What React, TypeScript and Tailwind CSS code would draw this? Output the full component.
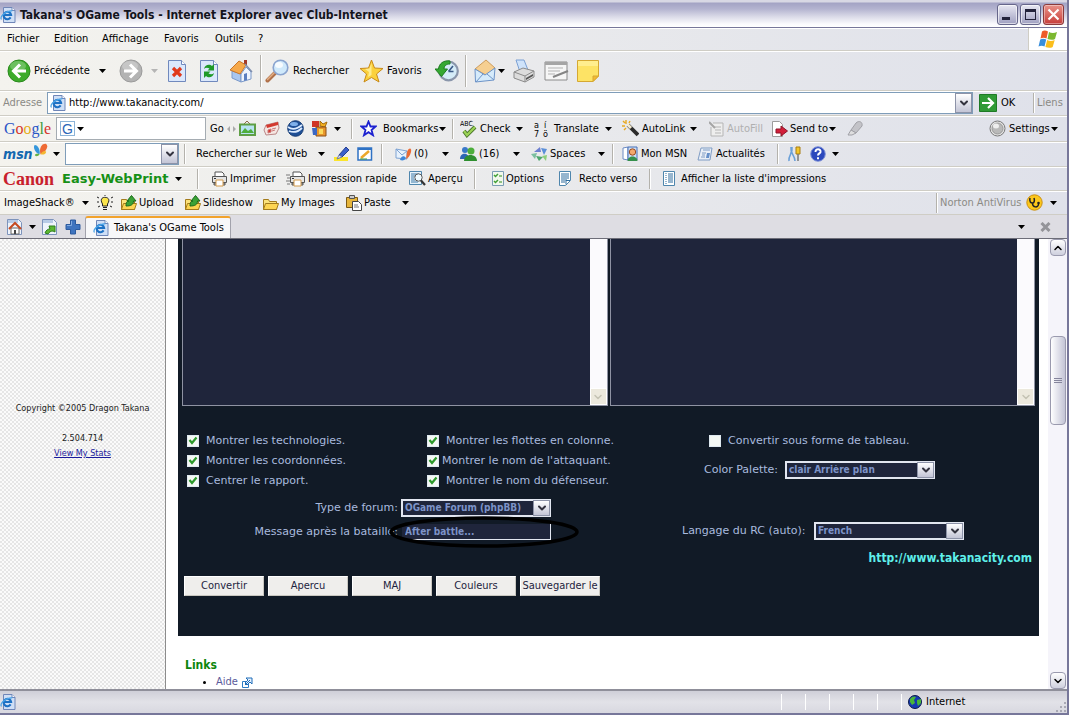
import type { ReactNode } from 'react'
import { ChevronDown, ChevronUp } from 'lucide-react'

const ui = "font-['DejaVu_Sans_Condensed','DejaVu_Sans',sans-serif]"
const page = "font-['DejaVu_Sans',sans-serif]"

const Caret = ({ className = 'text-black' }: { className?: string }) => (
  <svg width="7" height="4" viewBox="0 0 7 4" className={`shrink-0 ${className}`}>
    <path d="M0 0h7L3.5 4z" fill="currentColor" />
  </svg>
)

const Sep = ({ className = '' }: { className?: string }) => (
  <div className={`h-5 w-0.5 shrink-0 border-l border-[#b4b2ac] bg-white ${className}`} />
)

//toolbar button, the width covers the space up to the next one
const Tool = ({
  label,
  className,
  children,
}: {
  label: string
  className: string
  children?: ReactNode
}) => (
  <button
    type="button"
    aria-label={label}
    className={`flex h-full shrink-0 items-center whitespace-nowrap text-left ${className}`}
  >
    {children}
  </button>
)

const Bar = ({ className, children }: { className: string; children: ReactNode }) => (
  <div
    className={`flex shrink-0 items-center overflow-hidden border-b border-[#cfcdc5] bg-linear-to-r from-[#f4f3ee] to-[#dfe1ea] shadow-[inset_0_1px_0_#ffffff] ${className}`}
  >
    {children}
  </div>
)

const IEIcon = ({ size = 16 }: { size?: number }) => (
  <svg width={size} height={size} viewBox="0 0 16 16" className="shrink-0">
    <path d="M3.500.5h8.500l3 3v12h-11.500z" fill="#cfdff6" stroke="#6f86b8" />
    <path d="M12 .5v3h3" fill="#fff" stroke="#6f86b8" />
    <path
      d="M10.600 10.400A3.700 3.700 0 1 1 11.100 8H4"
      fill="none"
      stroke="#1d71c4"
      strokeWidth="2.100"
    />
    <path d="M1.500 12.500C-.5 10 4 4.500 12.300 3.600" fill="none" stroke="#4aa3e6" strokeWidth="1.200" />
  </svg>
)

const BackIcon = ({ forward = false }: { forward?: boolean }) => (
  <svg width="24" height="24" viewBox="0 0 24 24" className="shrink-0">
    <circle
      cx="12"
      cy="12"
      r="11"
      fill={forward ? '#b3b3b3' : '#3dab2b'}
      stroke={forward ? '#9b9b9b' : '#2a8a1c'}
    />
    <ellipse cx="11" cy="7" rx="8" ry="5" fill="#fff" opacity=".25" />
    <path
      d={forward ? 'M5 12h12M11 5.500l6.500 6.500-6.500 6.500' : 'M19 12H7M13 5.500L6.500 12l6.500 6.500'}
      fill="none"
      stroke="#fff"
      strokeWidth="3"
    />
  </svg>
)

const StopIcon = () => (
  <svg width="20" height="24" viewBox="0 0 20 24" className="shrink-0">
    <path d="M1.500 1.500h13l4 4v17h-17z" fill="#dbe8fc" stroke="#7089bd" />
    <path d="M14.500 1.500v4h4" fill="#fff" stroke="#7089bd" />
    <path d="M6 9l8 8M14 9l-8 8" stroke="#e0391c" strokeWidth="3.200" />
  </svg>
)

const RefreshIcon = () => (
  <svg width="20" height="24" viewBox="0 0 20 24" className="shrink-0">
    <path d="M1.500 1.500h13l4 4v17h-17z" fill="#dbe8fc" stroke="#7089bd" />
    <path d="M14.500 1.500v4h4" fill="#fff" stroke="#7089bd" />
    <path d="M5 10c1-5 6-5 8-3l2-2v6.500H8.500l2-2c-2-1-4-1-5.500.5z" fill="#1f9a2a" />
    <path d="M15 14c-1 5-6 5-8 3l-2 2v-6.500h6.500l-2 2c2 1 4 1 5.500-.5z" fill="#1f9a2a" />
  </svg>
)

const HomeIcon = () => (
  <svg width="24" height="24" viewBox="0 0 24 24" className="shrink-0">
    <path d="M15 1h3v5h-3z" fill="#a33a26" />
    <path d="M3 12l9 3v8l-9-4z" fill="#a9c6ee" stroke="#7b99c9" />
    <path d="M12 15l5-7 5 5v7l-10 3z" fill="#eef4fd" stroke="#7b99c9" />
    <path d="M1 11L10 2l7 4-6 9z" fill="#f6a94a" stroke="#c9762b" />
    <path d="M16 5l7 8" stroke="#7f8fae" strokeWidth="1.500" />
    <path d="M15 15l3-1v7l-3 1z" fill="#5b7fc0" />
  </svg>
)

const SearchIcon = () => (
  <svg width="25" height="24" viewBox="0 0 25 24" className="shrink-0">
    <path d="M10 14L2.500 21.500" stroke="#b0714a" strokeWidth="4" strokeLinecap="round" />
    <path d="M9.500 13.500L2.500 20.500" stroke="#e2ae85" strokeWidth="1.500" strokeLinecap="round" />
    <circle cx="15.500" cy="8.500" r="7.300" fill="#cfe9fb" stroke="#8aa4cf" strokeWidth="1.600" />
    <ellipse cx="14" cy="6" rx="4" ry="3" fill="#fff" opacity=".8" />
  </svg>
)

const StarIcon = () => (
  <svg width="25" height="24" viewBox="0 0 25 24" className="shrink-0">
    <path
      d="M12.500 1l3 8 8.500.5-6.500 5.500 2.500 8-7.500-4.500L5 23l2.500-8L1 9.500 9.500 9z"
      fill="#fbd13c"
      stroke="#c98a18"
      strokeLinejoin="round"
    />
    <path d="M12.500 4v12L9 18l1-5-4-3 4.500-.5z" fill="#fff2a4" opacity=".8" />
  </svg>
)

const HistoryIcon = () => (
  <svg width="24" height="24" viewBox="0 0 24 24" className="shrink-0">
    <circle cx="13.500" cy="12" r="9.300" fill="#d5ecf8" stroke="#8a96ab" strokeWidth="2.200" />
    <path d="M13.500 12.500L18 7M13.500 12.500h5" stroke="#3b5a86" strokeWidth="1.600" />
    <path
      d="M15 2C8 1 4 5 3.500 10H0l6.500 7.500L12.500 10H9c0-3 2-5 6-5z"
      fill="#35a832"
      stroke="#1e7d20"
    />
  </svg>
)

const MailIcon = () => (
  <svg width="22" height="24" viewBox="0 0 22 24" className="shrink-0">
    <path d="M1 10L12 1l9 8-9 7z" fill="#f6cf91" stroke="#cd9c5c" />
    <path d="M1 10l10 6 10-7-1 12L1.500 23z" fill="#d6ebfb" stroke="#6d94c8" />
    <path d="M2 23l7-8M20 21l-7-6" stroke="#6d94c8" />
  </svg>
)

const PrintIcon = () => (
  <svg width="24" height="24" viewBox="0 0 24 24" className="shrink-0">
    <path d="M4 1h8l4 10-8 2z" fill="#cfe3fa" stroke="#7ba0d4" />
    <path d="M2 13l9-4 11 3v6l-9 5-11-4z" fill="#dcdcdc" stroke="#8b8b8b" />
    <path d="M2 13l11 4 9-5M13 17v6" fill="none" stroke="#8b8b8b" />
    <path d="M14 19l7-4v2l-7 4z" fill="#555" />
  </svg>
)

const EditIcon = () => (
  <svg width="25" height="20" viewBox="0 0 25 20" className="shrink-0">
    <path d="M1 1h22v18H1z" fill="#f6f6f6" stroke="#8c8c8c" />
    <path d="M1 1h22v3H1z" fill="#a5a5a5" />
    <path d="M4 7h15M4 10h12M4 13h7" stroke="#b3b3b3" />
    <path d="M24 10L9 16" stroke="#858585" strokeWidth="2" />
  </svg>
)

const NoteIcon = () => (
  <svg width="24" height="24" viewBox="0 0 24 24" className="shrink-0">
    <path d="M1.500 1.500h21V17L17 22.500H1.500z" fill="#fde365" stroke="#d5a832" />
    <path d="M2 2h20v5H2z" fill="#fff2a0" opacity=".7" />
    <path d="M22.500 17H17v5.500z" fill="#f4b932" stroke="#d5a832" />
  </svg>
)

const WindowsFlag = () => (
  <svg width="20" height="19" viewBox="0 0 20 19">
    <path d="M4 1.500c2-1.500 4-1 6 0L8.500 8.500c-2-1-4-1-6 0z" fill="#ee5a29" />
    <path d="M11 2c2 1.200 5 1.500 8 0l-2 7c-2 1.200-5 1-7.500 0z" fill="#7cb82f" />
    <path d="M2.200 9.500c2-1 4-1 6 0L6.500 16.500c-2-1-4-1-6 0z" fill="#3a8fdc" />
    <path d="M9.200 10c2 1.200 5 1.200 7.500 0l-2 7c-2 1.200-5 1-7.300 0z" fill="#fbbe1c" />
  </svg>
)

const PictureIcon = () => (
  <svg width="17" height="15" viewBox="0 0 17 15" className="shrink-0">
    <path d="M5 3l3-3 3 3" fill="none" stroke="#8a6a4a" />
    <path d="M1 3.500h15v10.500H1z" fill="#b8e3f3" stroke="#5f9f45" strokeWidth="2" />
    <path d="M2 12l4-5 3 3 3-2 3 4z" fill="#4fae3d" />
  </svg>
)

const NewsIcon = () => (
  <svg width="17" height="15" viewBox="0 0 17 15" className="shrink-0">
    <path d="M3 4l12-3 1 6-3 6-10 1-2-5z" fill="#f5e6e2" stroke="#b88" />
    <path d="M3 4l12-3v3L4 7z" fill="#d3392f" />
    <path d="M5 9l3-1v3l-3 1zM9 8l4-1M9 10l3-1" fill="#d3392f" stroke="#c77" />
  </svg>
)

const GlobeIcon = () => (
  <svg width="17" height="17" viewBox="0 0 17 17" className="shrink-0">
    <circle cx="8.500" cy="8.500" r="7.800" fill="#1e4f96" stroke="#153a73" />
    <path d="M1 7c4 3 9 2 14-2M2 11c5 2 9 1 13-3" fill="none" stroke="#dcebff" strokeWidth="1.800" />
    <ellipse cx="7" cy="4" rx="4" ry="2" fill="#7fb0ea" />
  </svg>
)

const PuzzleIcon = () => (
  <svg width="17" height="17" viewBox="0 0 17 17" className="shrink-0">
    <path d="M1 1h7v6H1z" fill="#cf3526" />
    <path d="M9 1l3 3 4-2-2 5-5-1z" fill="#f3b11f" stroke="#a36a11" />
    <path d="M5 7h10v9H5z" fill="#e9962c" stroke="#8a4e18" />
    <path d="M1 8h5v7H2z" fill="#3c68c4" />
    <path d="M8 9h4v5H8z" fill="#fbdb5c" />
  </svg>
)

const BlueStar = () => (
  <svg width="17" height="17" viewBox="0 0 17 17" className="shrink-0">
    <path
      d="M8.500 1.500l2 5h5l-4 3.500 1.500 5.200-4.500-3-4.500 3L5.500 10l-4-3.500h5z"
      fill="#fff"
      stroke="#1d22d0"
      strokeWidth="1.800"
    />
  </svg>
)

const CheckIcon = () => (
  <svg width="18" height="18" viewBox="0 0 18 18" className="shrink-0">
    <text x="0" y="6" fontSize="7" fontFamily="DejaVu Sans Condensed">
      ABC
    </text>
    <path d="M4 11l3 4 8-8" fill="none" stroke="#49752b" strokeWidth="4" />
    <path d="M4 11l3 4 8-8" fill="none" stroke="#9bd256" strokeWidth="2.200" />
  </svg>
)

const TranslateIcon = () => (
  <svg
    width="17"
    height="18"
    viewBox="0 0 17 18"
    className="shrink-0"
    fontSize="9"
    fontFamily="DejaVu Sans Condensed"
  >
    <text x="0" y="8">a</text>
    <text x="10" y="8">í</text>
    <text x="0" y="17">7</text>
    <text x="9" y="17">ö</text>
  </svg>
)

const WandIcon = () => (
  <svg width="17" height="17" viewBox="0 0 17 17" className="shrink-0">
    <path d="M6 5l10 10" stroke="#2b2b2b" strokeWidth="3.800" />
    <path d="M5 4l4 4" stroke="#f4ead0" strokeWidth="3" />
    <path d="M4 0v4M0 6h3M1 1l2 2M8 1L7 3M2 10l2-2" stroke="#e8a91f" strokeWidth="1.400" />
  </svg>
)

const AutoFillIcon = () => (
  <svg width="15" height="16" viewBox="0 0 15 16" className="shrink-0">
    <path d="M4 2h10v13H2V6" fill="#eee" stroke="#b5b5b5" />
    <path d="M6 6h6M6 9h6M6 12h6" stroke="#b5b5b5" />
    <path d="M0 1l6 6" stroke="#a5a5a5" strokeWidth="2" />
  </svg>
)

const SendIcon = () => (
  <svg width="17" height="16" viewBox="0 0 17 16" className="shrink-0">
    <path d="M1.500.5h7l3 3v12h-10z" fill="#fff" stroke="#9c9c9c" />
    <path d="M5 8h5V5l6.500 5-6.500 5v-3H5z" fill="#d21f3a" stroke="#8f1428" />
  </svg>
)

const MarkerIcon = () => (
  <svg width="16" height="16" viewBox="0 0 16 16" className="shrink-0">
    <path d="M9 2c3-3 7-1 6 3l-6 7-5-3z" fill="#c3c3c8" stroke="#a0a0a6" />
    <path d="M4 9l5 3-4 2H1z" fill="#dededf" stroke="#a0a0a6" />
  </svg>
)

const OrbIcon = () => (
  <svg width="17" height="17" viewBox="0 0 17 17" className="shrink-0">
    <circle cx="8.500" cy="8.500" r="7.500" fill="#e6e6e6" stroke="#777" />
    <circle cx="8.500" cy="8.500" r="5.500" fill="#b9b9b9" stroke="#999" />
    <ellipse cx="7" cy="6" rx="3" ry="2.500" fill="#eee" />
  </svg>
)

const Butterfly = () => (
  <svg width="15" height="15" viewBox="0 0 16 16" className="mb-2 shrink-0">
    <path d="M7 12C1 10 0 3 2 2c3 0 6 5 5 10z" fill="#3597dc" />
    <path d="M8 12C6 5 10 0 14 1c3 2 0 9-6 11z" fill="#ee6b35" />
    <path d="M8 12c2-4 5-4 6-3 0 3-3 4-6 3z" fill="#f4b731" />
    <path d="M7 12c-3-1-5 0-5 1 1 2 4 1 5-1z" fill="#67b346" />
  </svg>
)

const PencilIcon = () => (
  <svg width="17" height="16" viewBox="0 0 17 16" className="shrink-0">
    <path d="M1 11h14v4H1z" fill="#fbe52c" />
    <path d="M6 9l7-8 3 3-7 7z" fill="#3b60cb" stroke="#25408f" />
    <path d="M6 9l3 2-5 2z" fill="#dfe5f5" stroke="#6c7aa8" />
  </svg>
)

const FormEditIcon = () => (
  <svg width="16" height="14" viewBox="0 0 16 14" className="shrink-0">
    <path d="M1 1h13.500v12H1z" fill="#fff" stroke="#2f72c4" strokeWidth="1.500" />
    <path d="M1 1h13.500v2H1z" fill="#2f72c4" />
    <path d="M4 11l8-7" stroke="#eca72a" strokeWidth="2.500" />
    <path d="M3 12h7" stroke="#3a9c44" />
  </svg>
)

const HotmailIcon = () => (
  <svg width="17" height="16" viewBox="0 0 17 16" className="shrink-0">
    <path d="M1 3l11 2v8L1 12z" fill="#e8f2fd" stroke="#7ea3d3" />
    <path d="M1 3l6 6 5-4" fill="none" stroke="#7ea3d3" />
    <path d="M12 6c2-5 5-4 4 0s-3 6-5 7z" fill="#e96b36" />
    <path d="M11 12c-2-3-5-2-6 2 3 1 5 0 6-2z" fill="#3d86da" />
  </svg>
)

const PeopleIcon = () => (
  <svg width="17" height="16" viewBox="0 0 17 16" className="shrink-0">
    <circle cx="5" cy="4" r="3" fill="#3a79c9" />
    <path d="M0 13c0-7 9-7 9 0z" fill="#2f67b5" />
    <circle cx="11" cy="5" r="3.500" fill="#4cae3b" />
    <path d="M4 15c0-8 13-8 13 0z" fill="#2e8f2f" />
  </svg>
)

const SpacesIcon = () => (
  <svg width="17" height="16" viewBox="0 0 17 16" className="shrink-0">
    <path d="M3 6l6-5 1 5z" fill="#6d7fd0" />
    <path d="M10 2l6 1-3 6z" fill="#5b8fd8" />
    <path d="M0 8l6-1-2 6z" fill="#7cbf9f" />
    <path d="M5 10l7 1-4 4z" fill="#4ea66d" />
    <path d="M11 10l5-1-1 6z" fill="#8ecf7c" />
  </svg>
)

const MonMsnIcon = () => (
  <svg width="17" height="16" viewBox="0 0 17 16" className="shrink-0">
    <path d="M1 2l5-1v13l-5-1z" fill="#fff" stroke="#6d8cc4" />
    <path d="M6 1h9v13H6z" fill="#cfe0f6" stroke="#446eb6" />
    <circle cx="10.500" cy="6" r="3.200" fill="#f3a96c" stroke="#9a4c22" />
    <path d="M5.500 15c0-6 10-6 10 0z" fill="#35904c" />
  </svg>
)

const ActuIcon = () => (
  <svg width="17" height="14" viewBox="0 0 17 14" className="shrink-0">
    <path d="M4 1h11l-2 12H1l2-8z" fill="#e9eff7" stroke="#7f9cc4" />
    <path d="M6 3h7M5 6h4M5 8h3M4 10h4" stroke="#7f9cc4" />
    <path d="M10 6h3l-1 5H9z" fill="#6690c9" />
  </svg>
)

const ToolsIcon = () => (
  <svg width="14" height="16" viewBox="0 0 14 16" className="shrink-0">
    <path d="M2 15C1 9 6 8 5 1M8 15C8 9 3 8 4 1" fill="none" stroke="#6ba0d8" strokeWidth="1.600" />
    <path d="M9 1h4v7H9z" fill="#f3c62a" stroke="#a77d12" />
    <path d="M11 8v7" stroke="#777" strokeWidth="1.500" />
  </svg>
)

const HelpIcon = () => (
  <svg width="16" height="16" viewBox="0 0 16 16" className="shrink-0">
    <circle cx="8" cy="8" r="7.300" fill="#2b48bd" stroke="#7f92d8" />
    <path d="M5.500 6c0-4 5.500-3.500 5 0-.3 1.500-2.500 1.500-2.500 3.500M8 11.200v2" fill="none" stroke="#fff" strokeWidth="2" />
  </svg>
)

const CanonPrinter = ({ fast = false }: { fast?: boolean }) => (
  <svg width={fast ? 20 : 17} height="16" viewBox={fast ? '-3 0 20 16' : '0 0 17 16'} className="shrink-0">
    <path d="M4 5V1h7l2 2v2" fill="#fff" stroke="#555" />
    <path d="M1.500 5.500h14v6h-14z" fill="#e4e4e4" stroke="#555" />
    <path d="M3 12h11v2H3z" fill="#bbb" stroke="#555" />
    <path d="M5 9h7v6H5z" fill="#fff" stroke="#d39b4c" />
    <path d="M3 7.500h2" stroke="#333" />
    {fast && <path d="M-3 4h4M-2 7h3M-3 10h4M-2 13h3" stroke="#777" />}
  </svg>
)

const PreviewIcon = () => (
  <svg width="17" height="15" viewBox="0 0 17 15" className="shrink-0">
    <path d="M.5.5h12v13H.5z" fill="#e7f3fb" stroke="#4f86ad" />
    <path d="M2 3h8M2 5h4M2 7h3M2 9h4M2 11h7" stroke="#3f7ba8" />
    <circle cx="9.500" cy="6.500" r="3.700" fill="#eefaff" stroke="#555" />
    <path d="M12 9.500l4 4.500" stroke="#333" strokeWidth="2.200" />
  </svg>
)

const OptionsIcon = () => (
  <svg width="12" height="15" viewBox="0 0 12 15" className="shrink-0">
    <path d="M.5.5h11v14H.5z" fill="#f1f8ec" stroke="#7b9cb5" />
    <path d="M2 4l1.500 1.500L6 3M2 10l1.500 1.500L6 9" fill="none" stroke="#3f9f35" strokeWidth="1.500" />
    <path d="M7 5h3M7 11h3" stroke="#6fae5f" strokeWidth="1.500" />
  </svg>
)

const SheetIcon = ({ folded = false }: { folded?: boolean }) => (
  <svg width="13" height="15" viewBox="0 0 13 15" className="shrink-0">
    <path d={folded ? 'M.5.5h11v9l-5 5h-6z' : 'M.5.5h11v14H.5z'} fill="#fff" stroke="#4f86ad" />
    <path
      d={folded ? 'M2 3h8M2 5h8M2 7h8M2 9h6M2 11h4' : 'M5 3h5M5 5h5M5 7h5M5 9h5M5 11h5'}
      stroke="#2e6d9e"
    />
    {folded ? (
      <path d="M11 9.500H7v4" fill="none" stroke="#2e6d9e" />
    ) : (
      <path d="M3 2v11" stroke="#2e6d9e" strokeDasharray="1 1" />
    )}
  </svg>
)

const BulbIcon = () => (
  <svg width="16" height="16" viewBox="0 0 16 16" className="shrink-0">
    <path d="M5.500 9C2 3 7 2 8 2.500 10 2 14 4 10.500 9v2h-5z" fill="#fbe54b" stroke="#222" />
    <path d="M6 12.500h4M6 14.500h4M0 2l2 1M0 7h2M1 12l2-1M16 2l-2 1M16 7h-2M15 12l-2-1M8 0v1" stroke="#222" />
  </svg>
)

const FolderIcon = ({ arrow = false }: { arrow?: boolean }) => (
  <svg width="16" height="16" viewBox="0 0 16 16" className="shrink-0">
    <path d="M.5 14.500v-10h5l1 2h7v8z" fill="#fbe27a" stroke="#a37b1c" />
    <path d="M.5 14.500l2-6h13l-2 6z" fill="#fdd552" stroke="#a37b1c" />
    {arrow && (
      <path d="M5 11c0-4 1-5 3-5H6l4.500-5.500L15 6h-2.500c0 4-3 5-7.500 5z" fill="#3aa236" stroke="#1b6b1b" />
    )}
  </svg>
)

const PasteIcon = () => (
  <svg width="16" height="16" viewBox="0 0 16 16" className="shrink-0">
    <path d="M.5 2.500h11v10H.5z" fill="#e6b53b" stroke="#7c5a14" />
    <path d="M3.500.5h5v3h-5z" fill="#ccc" stroke="#555" />
    <path d="M6.500 6.500h6l3 3v6h-9z" fill="#fff" stroke="#444" />
    <path d="M8 10h4M8 12h5" stroke="#777" />
  </svg>
)

const NortonIcon = () => (
  <svg width="17" height="17" viewBox="0 0 17 17" className="shrink-0">
    <circle cx="8.500" cy="8.500" r="7.700" fill="#fcc71b" stroke="#c98f12" />
    <path d="M4 4c-1 4 1 5 2.500 5S9 7 8 4M6.500 9c0 5 6 5 6 1" fill="none" stroke="#222" strokeWidth="1.500" />
    <circle cx="12.500" cy="9" r="1.300" fill="#222" />
  </svg>
)

const TabPageIcon = ({ home = false }: { home?: boolean }) => (
  <svg width="16" height="16" viewBox="0 0 16 16" className="shrink-0">
    <path d="M.5.500h11l3 3v12H.5z" fill="#eef3fb" stroke="#7d93bb" />
    <path d="M1 1h10v3H1z" fill="#b8cbe6" />
    {home ? (
      <>
        <path d="M4 9h8v6H4z" fill="#fff" stroke="#666" />
        <path d="M2 10l6-6 6 6" fill="none" stroke="#c5481f" strokeWidth="2" />
        <path d="M7 11h2v4H7z" fill="#444" />
      </>
    ) : (
      <path d="M3 14c1-3 3-4 5-4L7 7h6v6l-2-1c-2 0-4 1-5 3z" fill="#5cb832" stroke="#2f7d1c" />
    )}
  </svg>
)

const PlusIcon = () => (
  <svg width="16" height="16" viewBox="0 0 16 16" className="shrink-0">
    <path d="M5.500 1h5v4.500H15v5h-4.500V15h-5v-4.500H1v-5h4.500z" fill="#3f74bf" stroke="#2c5a9e" />
    <path d="M6.500 2v4.500H2" fill="none" stroke="#82aae0" />
  </svg>
)

const EarthIcon = () => (
  <svg width="14" height="14" viewBox="0 0 14 14" className="shrink-0">
    <circle cx="7" cy="7" r="6.500" fill="#1438b4" stroke="#0a1a4a" />
    <path d="M2 4c2-3 5-3 6-2L6 5l1 3-3 2-2-3zM9 5l4-1v4l-3 3-1-3z" fill="#49b53a" />
  </svg>
)

const DropButton = ({ className = '' }: { className?: string }) => (
  <span
    className={`pointer-events-none flex items-center justify-center border border-[#8d93a8] bg-linear-to-b from-white to-[#c3c5d6] text-[#33333f] ${className}`}
  >
    <ChevronDown size={12} strokeWidth={4} />
  </span>
)

const Select = ({ id, value }: { id: string; value: string }) => (
  <span className="relative block h-[18px] w-[150px] shrink-0">
    <select
      id={id}
      defaultValue={value}
      className={`h-full w-full appearance-none border-2 border-[#e2e6f0] bg-[#1f253b] pl-0.5 text-[10px] font-bold leading-none text-[#7d93c8] ${ui}`}
    >
      <option>{value}</option>
    </select>
    <DropButton className="absolute inset-y-px right-px w-[17px]" />
  </span>
)

const Check = ({
  id,
  label,
  checked = true,
  tight = false,
}: {
  id: string
  label: string
  checked?: boolean
  tight?: boolean
}) => (
  <div className="flex h-5 items-center">
    <input
      id={id}
      type="checkbox"
      defaultChecked={checked}
      className="peer size-3 shrink-0 appearance-none border border-[#dfe9f0] bg-[#f4f8f4]"
    />
    <svg
      width="12"
      height="12"
      viewBox="0 0 12 12"
      className="pointer-events-none -ml-3 shrink-0 opacity-0 peer-checked:opacity-100"
    >
      <path d="M2.500 5l2.500 3 4.500-5.500" fill="none" stroke="#2e9a2c" strokeWidth="2.200" />
    </svg>
    <label htmlFor={id} className={`whitespace-nowrap ${tight ? 'pl-[3px]' : 'pl-[7px]'}`}>
      {label}
    </label>
  </div>
)

const ReportBox = ({ label }: { label: string }) => (
  <div className="flex flex-1 border border-t-0 border-[#8f93a3]">
    <textarea aria-label={label} className="min-w-0 flex-1 resize-none bg-[#1f253b] outline-none" />
    <div className="flex w-[17px] flex-col justify-end bg-[#fbfafd]">
      <span className="flex h-[17px] items-center justify-center border border-white bg-[#ece9dd] text-[#c5c3b4]">
        <ChevronDown size={12} strokeWidth={3} />
      </span>
    </div>
  </div>
)

const buttons = ['Convertir', 'Apercu', 'MAJ', 'Couleurs', 'Sauvegarder le']

const TitleBar = () => (
  <header className="flex h-7 shrink-0 items-center border-b border-[#77779a] bg-[linear-gradient(180deg,#d8d8e4_0px,#d8d8e4_2px,#a3a3c4_3px,#b4b4d0_9px,#dcdce9_17px,#fafafd_24px,#ffffff_27px)] pt-0.5">
    <IEIcon />
    <h1 className="flex-1 whitespace-nowrap pl-1 text-xs font-bold text-[#14141c]">
      Takana's OGame Tools - Internet Explorer avec Club-Internet
    </h1>
    <div className="flex gap-0.5 pr-[3px]">
      <button
        type="button"
        aria-label="Réduire"
        className="h-[21px] w-[21px] rounded-[3px] border border-[#66668a] bg-linear-to-b from-[#e8e8f2] to-[#a0a0c0] pl-1 pt-2 shadow-[inset_0_0_0_1px_#ffffff99]"
      >
        <span className="block h-[3px] w-2 bg-[#23233a]" />
      </button>
      <button
        type="button"
        aria-label="Agrandir"
        className="flex h-[21px] w-[21px] items-center justify-center rounded-[3px] border border-[#66668a] bg-linear-to-b from-[#e8e8f2] to-[#a0a0c0] shadow-[inset_0_0_0_1px_#ffffff99]"
      >
        <span className="block h-[11px] w-[11px] border border-t-[3px] border-[#23233a]" />
      </button>
      <button
        type="button"
        aria-label="Fermer"
        className="flex h-[21px] w-[21px] items-center justify-center rounded-[3px] border border-[#8a3a3a] bg-linear-to-b from-[#e89088] to-[#c63c3a] shadow-[inset_0_0_0_1px_#ffffff66]"
      >
        <svg width="13" height="13" viewBox="0 0 13 13">
          <path d="M1.500 1.500l10 10M11.500 1.500l-10 10" stroke="#fff" strokeWidth="2.200" />
        </svg>
      </button>
    </div>
  </header>
)

const Toolbars = () => (
  <>
    <Bar className="h-[23px] pl-[7px]">
      <Tool label="Fichier" className="w-[47px]">Fichier</Tool>
      <Tool label="Edition" className="w-12">Edition</Tool>
      <Tool label="Affichage" className="w-[62px]">Affichage</Tool>
      <Tool label="Favoris" className="w-[51px]">Favoris</Tool>
      <Tool label="Outils" className="w-[43px]">Outils</Tool>
      <Tool label="?" className="w-4">?</Tool>
      <div className="ml-auto flex h-full w-[39px] items-center justify-center border-l border-[#cfcdc5] bg-white">
        <WindowsFlag />
      </div>
    </Bar>

    <Bar className="h-10 pl-[7px]">
      <Tool label="Précédente" className="w-[92px] gap-[3px]"><BackIcon />Précédente</Tool>
      <Tool label="Pages précédentes" className="w-5"><Caret /></Tool>
      <Tool label="Suivante" className="w-8"><BackIcon forward /></Tool>
      <Tool label="Pages suivantes" className="w-4"><Caret className="text-[#b5b5b5]" /></Tool>
      <Tool label="Arrêter" className="w-8"><StopIcon /></Tool>
      <Tool label="Actualiser" className="w-[30px]"><RefreshIcon /></Tool>
      <Tool label="Démarrage" className="w-[31px]"><HomeIcon /></Tool>
      <Sep className="h-8" />
      <Tool label="Rechercher" className="ml-[3px] w-[94px] gap-[3px]"><SearchIcon />Rechercher</Tool>
      <Tool label="Favoris" className="w-[76px] gap-[3px]"><StarIcon />Favoris</Tool>
      <Tool label="Historique" className="w-[30px]"><HistoryIcon /></Tool>
      <Sep className="h-8" />
      <Tool label="Courrier" className="ml-[7px] w-[38px] gap-0.5"><MailIcon /><Caret /></Tool>
      <Tool label="Imprimer" className="w-8"><PrintIcon /></Tool>
      <Tool label="Modifier" className="w-8"><EditIcon /></Tool>
      <Tool label="Notes" className="w-8"><NoteIcon /></Tool>
    </Bar>

    <Bar className="h-[25px] pl-[3px]">
      <label htmlFor="address" className="w-11 shrink-0 text-[#8b8a85]">Adresse</label>
      <div className="flex h-[22px] flex-1 items-center border border-[#7f9db9] bg-white pl-0.5">
        <IEIcon />
        <input
          id="address"
          defaultValue="http://www.takanacity.com/"
          className="min-w-0 flex-1 bg-transparent pl-[3px] outline-none"
        />
        <DropButton className="h-full w-[17px]" />
      </div>
      <Tool label="OK" className="ml-1.5 w-[54px] gap-1">
        <svg width="18" height="18" viewBox="0 0 18 18" className="shrink-0">
          <path d="M.5.500h17v17H.5z" fill="#2f9a35" stroke="#1f7a26" />
          <path d="M3 9h10M9 4l5 5-5 5" fill="none" stroke="#fff" strokeWidth="2.200" />
        </svg>
        OK
      </Tool>
      <Sep />
      <span className="w-8 pl-0.5 text-[#8b8a85]">Liens</span>
    </Bar>

    <Bar className="h-[26px] pl-1">
      <span className="w-[52px] shrink-0 font-['Liberation_Serif',serif] text-base leading-none">
        <span className="text-[#2a56c6]">G</span>
        <span className="text-[#d5342a]">o</span>
        <span className="text-[#e5ac1a]">o</span>
        <span className="text-[#2a56c6]">g</span>
        <span className="text-[#3a9a3e]">l</span>
        <span className="text-[#d5342a]">e</span>
      </span>
      <div className="flex h-[23px] w-[150px] shrink-0 items-center gap-0.5 border border-[#a5acb2] bg-white pl-[3px]">
        <span className="flex size-[15px] items-center justify-center border border-[#8db4d8] font-['Liberation_Sans',sans-serif] text-sm leading-none text-[#2c66b8]">
          G
        </span>
        <Caret />
        <input aria-label="Google" className="min-w-0 flex-1 outline-none" />
      </div>
      <Tool label="Go" className="ml-1 w-[17px]">Go</Tool>
      <svg width="9" height="8" viewBox="0 0 9 8" className="mr-[3px] shrink-0">
        <path d="M3 1v6L0 4zM6 1v6l3-3z" fill="#aaa" />
      </svg>
      <Tool label="Images" className="w-6"><PictureIcon /></Tool>
      <Tool label="News" className="w-6"><NewsIcon /></Tool>
      <Tool label="Earth" className="w-6"><GlobeIcon /></Tool>
      <Tool label="Gadgets" className="w-10 gap-1.5"><PuzzleIcon /><Caret /></Tool>
      <Sep />
      <Tool label="Bookmarks" className="ml-[7px] w-[92px] gap-1.5">
        <BlueStar />
        <span className="flex items-center gap-px">Bookmarks<Caret /></span>
      </Tool>
      <Sep />
      <Tool label="Check" className="ml-1.5 w-[56px] gap-0.5"><CheckIcon />Check</Tool>
      <Tool label="Options de Check" className="w-[18px]"><Caret /></Tool>
      <Tool label="Translate" className="w-[71px] gap-[3px]"><TranslateIcon />Translate</Tool>
      <Tool label="Options de Translate" className="w-[17px]"><Caret /></Tool>
      <Tool label="AutoLink" className="w-[68px] gap-[3px]"><WandIcon />AutoLink</Tool>
      <Tool label="Options de AutoLink" className="w-[19px]"><Caret /></Tool>
      <Tool label="AutoFill" className="w-[62px] gap-[3px] text-[#b0b0b0]"><AutoFillIcon />AutoFill</Tool>
      <Tool label="Send to" className="w-[76px] gap-0.5">
        <SendIcon />
        <span className="flex items-center gap-px">Send to<Caret /></span>
      </Tool>
      <Tool label="Surligner" className="w-5"><MarkerIcon /></Tool>
      <Tool label="Settings" className="ml-auto w-[78px] gap-[3px]">
        <OrbIcon />
        <span className="flex items-center gap-px">Settings<Caret /></span>
      </Tool>
    </Bar>

    <Bar className="h-[25px] pl-[3px]">
      <Tool label="MSN" className="w-[50px]">
        <span className="text-sm font-bold italic leading-none text-[#1568b0]">msn</span>
        <Butterfly />
      </Tool>
      <Tool label="Menu MSN" className="w-3"><Caret /></Tool>
      <div className="flex h-[22px] w-[114px] shrink-0 border border-[#7f9db9] bg-white">
        <input aria-label="Recherche MSN" className="min-w-0 flex-1 outline-none" />
        <DropButton className="w-[17px]" />
      </div>
      <Sep className="ml-[5px]" />
      <Tool label="Rechercher sur le Web" className="ml-2.5 w-[122px]">Rechercher sur le Web</Tool>
      <Tool label="Options de recherche" className="w-[15px]"><Caret /></Tool>
      <Tool label="Surligneur" className="w-6"><PencilIcon /></Tool>
      <Tool label="Formulaire" className="w-6"><FormEditIcon /></Tool>
      <Sep />
      <Tool label="Hotmail" className="ml-3 w-[47px] gap-0.5"><HotmailIcon />(0)</Tool>
      <Tool label="Options Hotmail" className="w-[18px]"><Caret /></Tool>
      <Tool label="Messenger" className="w-[53px] gap-0.5"><PeopleIcon />(16)</Tool>
      <Tool label="Options Messenger" className="w-[18px]"><Caret /></Tool>
      <Tool label="Spaces" className="w-[67px] gap-0.5"><SpacesIcon />Spaces</Tool>
      <Tool label="Options Spaces" className="w-3.5"><Caret /></Tool>
      <Sep />
      <Tool label="Mon MSN" className="ml-2 w-[75px] gap-0.5"><MonMsnIcon />Mon MSN</Tool>
      <Tool label="Actualités" className="w-20 gap-0.5"><ActuIcon />Actualités</Tool>
      <Sep />
      <Tool label="Outils MSN" className="ml-2 w-[23px]"><ToolsIcon /></Tool>
      <Tool label="Aide MSN" className="w-9 gap-1.5"><HelpIcon /><Caret /></Tool>
    </Bar>

    <Bar className="h-6 pl-[3px]">
      <span className="w-[59px] shrink-0 font-['Liberation_Serif',serif] text-[18px] font-bold leading-none text-[#c8202c]">
        Canon
      </span>
      <Tool label="Easy-WebPrint" className="w-[135px] gap-1.5">
        <span className={`text-[13px] font-bold leading-none text-[#169016] ${page}`}>Easy-WebPrint</span>
        <Caret />
      </Tool>
      <Sep />
      <Tool label="Imprimer" className="ml-3 w-[75px] gap-0.5"><CanonPrinter />Imprimer</Tool>
      <Tool label="Impression rapide" className="w-[123px] gap-0.5"><CanonPrinter fast />Impression rapide</Tool>
      <Tool label="Aperçu" className="w-[65px] gap-0.5"><PreviewIcon />Aperçu</Tool>
      <Sep />
      <Tool label="Options" className="ml-4 w-[67px] gap-0.5"><OptionsIcon />Options</Tool>
      <Tool label="Recto verso" className="w-[90px] gap-[7px]"><SheetIcon folded />Recto verso</Tool>
      <Sep />
      <Tool label="Afficher la liste d'impressions" className="ml-3 gap-[5px]">
        <SheetIcon />
        Afficher la liste d'impressions
      </Tool>
    </Bar>

    <Bar className="h-6 pl-1">
      <Tool label="ImageShack" className="w-[93px] justify-between pr-2">ImageShack®<Caret /></Tool>
      <Tool label="Astuce" className="w-6"><BulbIcon /></Tool>
      <Tool label="Upload" className="w-16 gap-0.5"><FolderIcon arrow />Upload</Tool>
      <Tool label="Slideshow" className="w-[78px] gap-0.5"><FolderIcon arrow />Slideshow</Tool>
      <Tool label="My Images" className="w-[83px] gap-0.5"><FolderIcon />My Images</Tool>
      <Tool label="Paste" className="w-14 gap-0.5"><PasteIcon />Paste</Tool>
      <Tool label="Options de Paste" className="w-3"><Caret /></Tool>
      <Sep className="ml-auto" />
      <Tool label="Norton AntiVirus" className="w-[129px] pl-0.5">
        <span className="w-[86px] text-[#8b8a85]">Norton AntiVirus</span>
        <NortonIcon />
        <Caret className="ml-[7px] text-black" />
      </Tool>
    </Bar>

    <nav className="flex h-6 shrink-0 items-end border-b border-[#6d6d78] bg-[#dedde3] pl-[7px]">
      <Tool label="Onglet de démarrage" className="w-[35px] gap-1.5"><TabPageIcon home /><Caret /></Tool>
      <Tool label="Ajouter l'onglet" className="w-[23px]"><TabPageIcon /></Tool>
      <Tool label="Nouvel onglet" className="w-5"><PlusIcon /></Tool>
      <a
        href="#tab"
        className="flex h-[22px] w-[146px] shrink-0 items-center gap-[5px] whitespace-nowrap rounded-t-[3px] border border-b-0 border-t-2 border-[#a2a2ac] border-t-[#f2a32c] bg-[#f7f7f9] pl-[7px]"
      >
        <IEIcon />
        Takana's OGame Tools
      </a>
      <Tool label="Liste des onglets" className="ml-auto w-[22px]"><Caret /></Tool>
      <Tool label="Fermer l'onglet" className="w-[27px]">
        <svg width="11" height="10" viewBox="0 0 11 10">
          <path d="M1.500 1l8 8M9.500 1l-8 8" stroke="#949499" strokeWidth="3" />
        </svg>
      </Tool>
    </nav>
  </>
)

const ConvertForm = () => (
  <form className={`mx-[9px] ml-3 bg-[#111a26] text-[11px] leading-4 text-[#a9bbdf] ${page}`}>
    <div className="flex h-[167px] gap-0.5 px-1">
      <ReportBox label="Rapport de combat" />
      <ReportBox label="Rapport converti" />
    </div>
    <div className="flex h-[148px] justify-between pt-[25px]">
      <div className="w-[480px] shrink-0 pl-[9px]">
        <div className="grid grid-cols-[240px_1fr]">
          <Check id="tech" label="Montrer les technologies." />
          <Check id="column" label="Montrer les flottes en colonne." />
          <Check id="coords" label="Montrer les coordonnées." />
          <Check id="attacker" label="Montrer le nom de l'attaquant." tight />
          <Check id="center" label="Centrer le rapport." />
          <Check id="defender" label="Montrer le nom du défenseur." />
        </div>
        <div className="mt-2 grid grid-cols-[211px_150px] items-center gap-x-[3px] gap-y-1.5">
          <label htmlFor="forum" className="whitespace-nowrap text-right">Type de forum:</label>
          <Select id="forum" value="OGame Forum (phpBB)" />
          <label htmlFor="message" className="whitespace-nowrap text-right">Message après la bataille:</label>
          <span className="relative block">
            <input
              id="message"
              defaultValue="After battle..."
              className={`block h-[17px] w-full border border-l-[#111a26] border-t-[#111a26] border-[#e2e6f0] bg-[#1f253b] pl-[3px] text-[10px] font-bold text-[#7d93c8] ${ui}`}
            />
            {/* hand drawn ring over the field */}
            <svg
              width="190"
              height="34"
              viewBox="0 0 190 34"
              className="pointer-events-none absolute -left-3 -top-2 max-w-none"
            >
              <ellipse cx="95" cy="17" rx="93" ry="14" fill="none" stroke="#000" strokeWidth="3.500" />
            </svg>
          </span>
        </div>
      </div>
      <div className="flex w-[357px] shrink-0 flex-col">
        <div className="pl-[27px]">
          <Check id="table" label="Convertir sous forme de tableau." checked={false} />
        </div>
        <div className="mt-2.5 flex items-center pl-[22px]">
          <label htmlFor="palette" className="w-[81px] whitespace-nowrap">Color Palette:</label>
          <Select id="palette" value="clair Arrière plan" />
        </div>
        <div className="mt-[43px] flex items-center">
          <label htmlFor="lang" className="w-[132px] whitespace-nowrap">Langage du RC (auto):</label>
          <Select id="lang" value="French" />
        </div>
        <a href="#takanacity" className={`mt-2.5 self-end pr-[7px] text-xs font-bold text-[#5ff0ea] ${ui}`}>
          http://www.takanacity.com
        </a>
      </div>
    </div>
    <div className={`flex h-[82px] gap-1 pl-1.5 pt-[22px] ${ui}`}>
      {buttons.map((b) => (
        <button
          key={b}
          type="button"
          className="h-5 w-20 overflow-hidden whitespace-nowrap border border-white border-b-[#c9c7c0] border-r-[#c9c7c0] bg-[#efeeec] text-[#1d2340]"
        >
          {b}
        </button>
      ))}
    </div>
  </form>
)

export default function App() {
  return (
    <div
      className={`flex h-screen flex-col overflow-hidden border-b-2 border-r-2 border-[#77779a] bg-white text-[11px] leading-4 text-black ${ui}`}
    >
      <TitleBar />
      <Toolbars />

      <div className="flex min-h-0 flex-1">
        <aside className="w-[166px] shrink-0 border-r border-[#8c8c8c] bg-[conic-gradient(#e6e6e6_25%,#fbfbfb_0_50%,#e6e6e6_0_75%,#fbfbfb_0)] bg-[length:4px_4px] pt-[162px] text-center text-[9px] leading-[15px] text-[#222]">
          <p className="whitespace-nowrap">Copyright ©2005 Dragon Takana</p>
          <p className="mt-[15px]">2.504.714</p>
          <a href="#stats" className="text-[#1a1a9c] underline">View My Stats</a>
        </aside>

        <main className="min-w-0 flex-1 overflow-hidden">
          <ConvertForm />
          <section className="pl-[19px] pt-5">
            <h2 className="text-xs font-bold leading-[18px] text-[#0c860c]">Links</h2>
            <ul className="mt-0.5 list-disc pl-[31px] leading-3">
              <li>
                <a href="#aide" className="inline-flex items-center gap-1 text-[#5a5a9a]">
                  Aide
                  <svg width="11" height="11" viewBox="0 0 11 11">
                    <path d="M.5 4.500h6v6h-6z" fill="#fff" stroke="#2f7cc4" />
                    <path d="M3 8l5-5M4 1h6v6L8 5 5 8 3 6l3-3z" fill="#e6f2ff" stroke="#1f6cb8" />
                  </svg>
                </a>
              </li>
            </ul>
          </section>
        </main>

        <div className="flex w-[19px] shrink-0 flex-col items-center bg-[#f5f4fa]">
          <button
            type="button"
            aria-label="Défiler vers le haut"
            className="flex h-[17px] w-4 items-center justify-center rounded-sm border border-[#9a9aae] bg-linear-to-b from-white to-[#cfd0de]"
          >
            <ChevronUp size={12} strokeWidth={3} />
          </button>
          <div className="mt-20 flex h-[89px] w-4 flex-col items-center justify-center gap-px rounded-sm border border-[#9a9aae] bg-linear-to-r from-white to-[#c3c4d6]">
            <span className="h-px w-2 bg-[#85859c]" />
            <span className="h-px w-2 bg-[#85859c]" />
            <span className="h-px w-2 bg-[#85859c]" />
          </div>
          <button
            type="button"
            aria-label="Défiler vers le bas"
            className="mt-auto flex h-[17px] w-4 items-center justify-center rounded-sm border border-[#9a9aae] bg-linear-to-b from-white to-[#cfd0de]"
          >
            <ChevronDown size={12} strokeWidth={3} />
          </button>
        </div>
      </div>

      <footer className="flex h-6 shrink-0 items-center border-t-2 border-[#8f8f9a] bg-linear-to-b from-[#cfcfd8] via-[#e2e2e8] to-[#d8d8e0]">
        <IEIcon />
        <div className="ml-auto flex h-4">
          <span className="w-6 border-l border-white" />
          <span className="w-6 border-l border-white" />
          <span className="w-6 border-l border-white" />
          <span className="w-6 border-l border-white" />
          <span className="w-6 border-l border-white" />
          <span className="flex w-[166px] items-center gap-1 border-l border-white pl-1.5">
            <EarthIcon />
            Internet
          </span>
        </div>
        <svg width="12" height="12" viewBox="0 0 12 12" className="-ml-3 self-end">
          <path d="M9 1h2v2H9zM5 5h2v2H5zM9 5h2v2H9zM1 9h2v2H1zM5 9h2v2H5zM9 9h2v2H9z" fill="#a9a9b4" />
        </svg>
      </footer>
    </div>
  )
}
